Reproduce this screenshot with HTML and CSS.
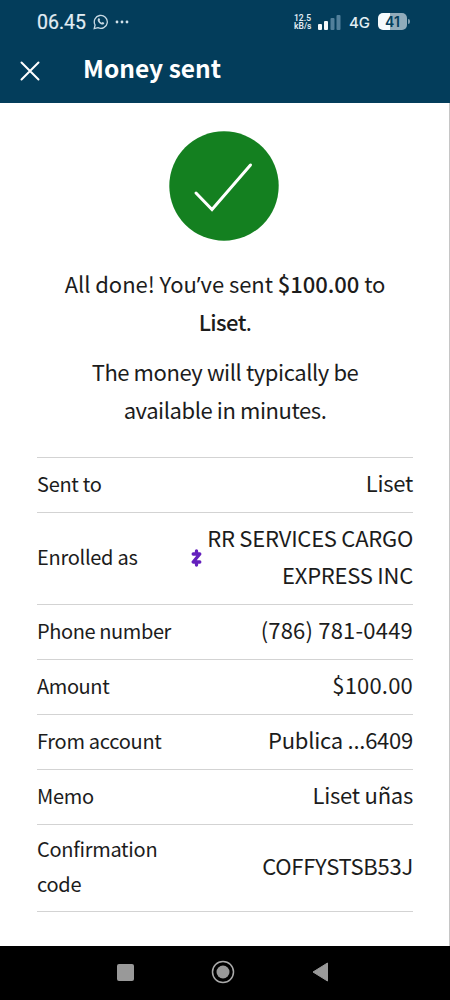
FILE: index.html
```html
<!DOCTYPE html>
<html lang="en">
<head>
<meta charset="utf-8">
<title>Money sent</title>
<link rel="stylesheet" href="styles.css">
</head>
<body>
<div class="screen">
  <header class="header">
    <div class="status">
      <span class="clock">06.45</span>
      <svg class="chat" width="16" height="16" viewBox="0 0 16 16" fill="none" stroke="#c9dae4"><path d="M1.2 14.6 2.1 11A6.5 6.5 0 1 1 4.9 13.7Z" stroke-width="1.3"/><path d="M5.2 4.5c.5-.5 1-.5 1.300 0l.6 1.300-.5.9c.4.9 1.100 1.600 2.200 2.100l.8-.7 1.500.7c.4.400-.1 1.400-.8 1.700-1.800.7-5.400-2-5.600-4.300 0-.7.100-1.300.5-1.700Z" fill="#c9dae4" stroke="none"/></svg>
      <svg class="more" width="14" height="4" viewBox="0 0 14 4" fill="#d3e2ea"><circle cx="2" cy="2" r="1.400"/><circle cx="7" cy="2" r="1.400"/><circle cx="12" cy="2" r="1.400"/></svg>
      <span class="rate"><span>12.5</span><span>kB/s</span></span>
      <svg class="signal" width="23" height="15" viewBox="0 0 23 15"><g fill="#f4fafc"><rect x="0" y="9" width="4" height="6" rx="1"/><rect x="6" y="6" width="4" height="9" rx="1"/></g><g fill="#52809b"><rect x="12.500" y="3" width="4" height="12" rx="1"/><rect x="18.500" y="0" width="4" height="15" rx="1"/></g></svg>
      <span class="network">4G</span>
      <span class="battery">41</span>
      <span class="battery-tip"></span>
    </div>
    <div class="titlebar">
      <svg class="close" width="20" height="20" viewBox="0 0 20 20" fill="none" stroke="#fff" stroke-width="2" stroke-linecap="round"><path d="M1.500 1.500 18.500 18.500M18.500 1.500 1.500 18.500"/></svg>
      <h1 class="title">Money sent</h1>
    </div>
  </header>
  <main class="content">
    <svg class="done" width="110" height="110" viewBox="0 0 110 110"><circle cx="55" cy="55" r="54.700" fill="#148020"/><path d="M27 62 43 78.500 81.500 34" fill="none" stroke="#fff" stroke-width="3" stroke-linecap="round" stroke-linejoin="miter"/></svg>
    <p class="message"><span class="amount-line">All done! You<span class="apostrophe">’</span>ve sent <b>$100.00</b> to</span><br><span class="name-line"><b>Liset</b>.</span></p>
    <p class="message availability">The money will typically be<br>available in minutes.</p>
    <dl class="details">
      <div class="row"><dt>Sent to</dt><dd>Liset</dd></div>
      <div class="row"><dt>Enrolled as</dt><dd class="enrolled"><svg width="11" height="18" viewBox="0 0 11 18" fill="none" stroke="#6420bd" stroke-width="3.300" stroke-linejoin="round" stroke-linecap="round"><path d="M2.200 5H8.800L2.200 13H8.800M5.500 2V5M5.500 13V16"/></svg><span>RR SERVICES CARGO<br>EXPRESS INC</span></dd></div>
      <div class="row"><dt class="tight">Phone number</dt><dd class="digits">(786) 781-0449</dd></div>
      <div class="row"><dt class="tight">Amount</dt><dd class="digits">$100.00</dd></div>
      <div class="row"><dt>From account</dt><dd>Publica ...6409</dd></div>
      <div class="row"><dt>Memo</dt><dd>Liset uñas</dd></div>
      <div class="row"><dt>Confirmation<br>code</dt><dd>COFFYSTSB53J</dd></div>
    </dl>
  </main>
  <nav class="nav">
    <svg width="17" height="17" viewBox="0 0 17 17"><rect width="17" height="17" rx="2" fill="#999"/></svg>
    <svg width="24" height="24" viewBox="0 0 24 24"><circle cx="12" cy="12" r="10.500" fill="none" stroke="#aaa" stroke-width="1.500"/><circle cx="12" cy="12" r="6.500" fill="#999"/></svg>
    <svg width="17" height="20" viewBox="0 0 17 20"><path d="M1 10 15.500 1V19Z" fill="#999" stroke="#999" stroke-linejoin="round"/></svg>
  </nav>
</div>
</body>
</html>
```
FILE: styles.css
```css
* { box-sizing: border-box; }
body { margin: 0; font-family: "Noto Sans CJK SC", "Noto Sans", sans-serif; color: #1c1c1c; }
.screen { width: 450px; height: 1000px; display: flex; flex-direction: column; background: #fff; overflow: hidden; }
.header { height: 103px; background: #033d5b; color: #fff; flex: none; }
.status { height: 43px; display: flex; align-items: center; padding-left: 37px; font-family: Roboto, sans-serif; color: #e2edf3; }
.clock { width: 49px; font-size: 19.5px; letter-spacing: 0; margin-right: 7px; padding-top: 2px; -webkit-text-stroke: 0.2px; }
.more { margin-left: 6px; }
.rate { display: flex; flex-direction: column; width: 18px; margin-left: 165px; margin-top: 1px; font-size: 8.5px; line-height: 8px; font-weight: 600; }
.signal { margin-left: 6px; margin-top: 1px; }
.network { width: 21px; margin-left: 8px; margin-top: 1px; font-family: Inter, sans-serif; font-size: 15px; font-weight: 500; }
.battery { width: 29px; height: 17px; margin-left: 8px; border-radius: 5px; background: linear-gradient(90deg, #f5fbfd 42%, #91abba 42%); color: #033d5b; font: 600 14px/17px Inter, sans-serif; text-align: center; }
.battery-tip { width: 2px; height: 5px; margin-left: 1px; background: #7d9caf; border-radius: 0 2px 2px 0; }
.titlebar { height: 60px; display: flex; align-items: center; padding: 0 0 5px 20px; }
.title { margin: 0 0 5px 43px; font: 700 24.5px/32px "Noto Sans CJK SC", sans-serif; }
.content { height: 843px; flex: none; padding: 28px 36px 0 37px; border-right: 1px solid #c6c6c6; }
.done { display: block; margin: 0 0 24px 132px; }
.message { margin: 0 0 13px; font-size: 22px; line-height: 37.5px; text-align: center; white-space: nowrap; }
.message b { font-weight: 500; }
.apostrophe { font-family: "Noto Sans", sans-serif; line-height: 1; }
.amount-line { letter-spacing: -0.05px; }
.name-line { letter-spacing: -0.6px; }
.availability { letter-spacing: -0.42px; }
.details { margin: 0; padding-top: 16px; }
.row { display: flex; align-items: center; justify-content: space-between; height: 55px; padding-bottom: 4px; border-top: 1px solid #d3d3d3; white-space: nowrap; }
.row:nth-child(2) { height: 92px; }
.row:last-child { height: 88px; border-bottom: 1px solid #d3d3d3; }
dt { font-size: 20px; line-height: 35px; letter-spacing: -0.28px; }
dt.tight { letter-spacing: -0.4px; }
dd { margin: 0; font-size: 22px; line-height: 37.5px; letter-spacing: -0.25px; text-align: right; }
dd.digits { letter-spacing: 0.2px; }
.enrolled { display: flex; align-items: center; gap: 5px; margin-top: -1px; }
.enrolled svg { margin-top: 4px; }
.nav { height: 54px; background: #000; display: flex; align-items: center; justify-content: space-between; padding: 0 121px 2px 117px; }
```
